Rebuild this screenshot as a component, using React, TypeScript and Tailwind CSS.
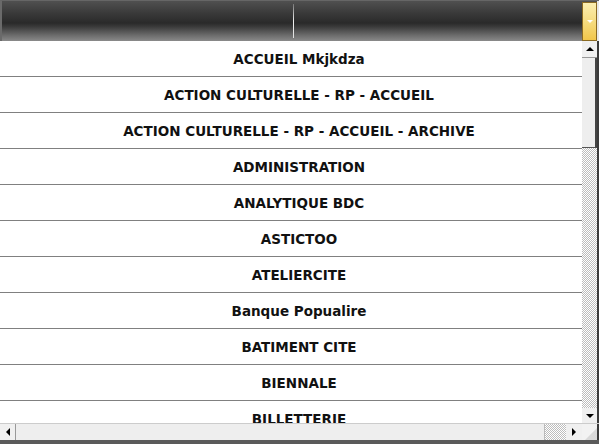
import React from "react";

const rows = [
  "ACCUEIL Mkjkdza",
  "ACTION CULTURELLE - RP - ACCUEIL",
  "ACTION CULTURELLE - RP - ACCUEIL - ARCHIVE",
  "ADMINISTRATION",
  "ANALYTIQUE BDC",
  "ASTICTOO",
  "ATELIERCITE",
  "Banque Popualire",
  "BATIMENT CITE",
  "BIENNALE",
  "BILLETTERIE",
  "BUREAU",
];

const checker =
  "bg-[repeating-conic-gradient(#bdbdbd_0_25%,#ffffff_0_50%)] bg-[length:2px_2px]";

function Tri({ dir }: { dir: "up" | "down" | "left" | "right" }) {
  const pts =
    dir === "up"
      ? "0,4 4,0 8,4"
      : dir === "down"
      ? "0,0 8,0 4,4"
      : dir === "left"
      ? "4,0 4,8 0,4"
      : "0,0 0,8 4,4";
  const w = dir === "up" || dir === "down" ? 8 : 4;
  const h = dir === "up" || dir === "down" ? 4 : 8;
  return (
    <svg width={w} height={h} viewBox={`0 0 ${w} ${h}`}>
      <polygon points={pts} fill="#000" />
    </svg>
  );
}

export default function App() {
  return (
    <div
      className="w-[599px] h-[444px] flex flex-col bg-white overflow-hidden"
      style={{ fontFamily: "'DejaVu Sans', Verdana, sans-serif" }}
    >
      {/* Header */}
      <div className="h-[41px] flex shrink-0 border-t border-[#666] border-l-2 border-l-[#6a6a6a] bg-[linear-gradient(to_bottom,#505050_0%,#3a3a3a_30%,#2a2a2a_55%,#3c3c3c_65%,#6a6a6a_85%,#8a8a8a_100%)]">
        <div className="w-[291px]" />
        <div className="w-px my-[3px] bg-[linear-gradient(to_bottom,#777,#f0f0f0_50%,#ddd)]" />
        <div className="flex-1" />
        <div className="w-[15px] mt-[1px] border border-[#8a6a22] bg-[linear-gradient(to_bottom,#fbeeb0_0%,#f6dc80_50%,#f1c64a_100%)] flex items-center justify-center">
          <svg width="6" height="3" viewBox="0 0 6 3">
            <polygon points="0,0 6,0 3,3" fill="#fff" />
          </svg>
        </div>
        <div className="w-[2px] bg-[#e8e8e8]" />
      </div>

      {/* Body */}
      <div className="flex-1 flex min-h-0">
        <div className="flex-1 overflow-hidden">
          {rows.map((r) => (
            <div
              key={r}
              className="h-[36px] pl-[16px] pt-[2px] flex items-center justify-center border-b border-[#808080] text-[13.5px] font-bold text-[#111] whitespace-nowrap"
            >
              {r}
            </div>
          ))}
        </div>
        {/* Vertical scrollbar */}
        <div className="w-[15px] flex flex-col">
          <div className="h-[17px] bg-[#f0f0f0] border-b border-[#999] flex items-center justify-center">
            <Tri dir="up" />
          </div>
          <div className="h-[90px] bg-[#eeeeee] border-r-2 border-[#444] border-b border-b-[#555]" />
          <div className={`flex-1 ${checker}`} />
          <div className="h-[15px] bg-[#f0f0f0] flex items-center justify-center">
            <Tri dir="down" />
          </div>
        </div>
        <div className="w-[2px] bg-[#3a3a3a]" />
      </div>

      {/* Horizontal scrollbar */}
      <div className="h-[17px] flex shrink-0 border-t border-[#ccc]">
        <div className="w-[16px] bg-[#f0f0f0] border-r border-[#999] flex items-center justify-center">
          <Tri dir="left" />
        </div>
        <div className="w-[529px] bg-[#eeeeee] border-r border-[#bbb]" />
        <div className={`w-[21px] ${checker}`} />
        <div className="w-[16px] bg-[#f0f0f0] flex items-center justify-center">
          <Tri dir="right" />
        </div>
        <div className="w-[15px] bg-[#f2f2f2] relative">
          <svg className="absolute right-0 bottom-0" width="12" height="12" viewBox="0 0 12 12">
            <polygon points="12,0 12,12 0,12" fill="#d8d8d8" />
          </svg>
        </div>
        <div className="w-[2px] bg-[#3a3a3a]" />
      </div>
      <div className="h-[4px] shrink-0 bg-[#5a5a5a]" />
    </div>
  );
}
